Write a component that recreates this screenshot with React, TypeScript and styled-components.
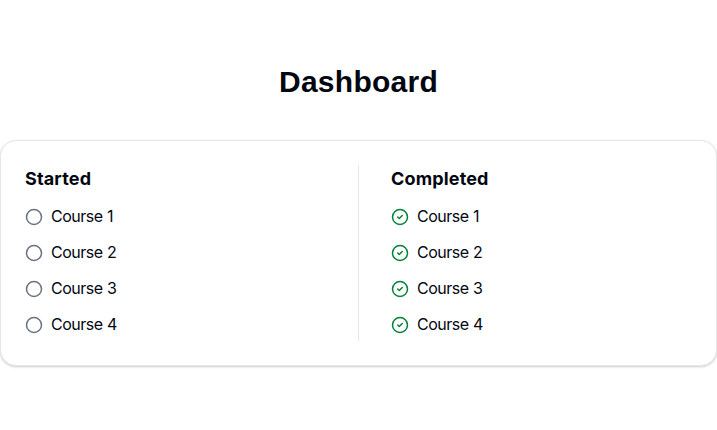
import React from "react";
import styled, { createGlobalStyle } from "styled-components";
import { Circle, CircleCheck } from "lucide-react";

const GlobalStyle = createGlobalStyle`
  *, *::before, *::after { box-sizing: border-box; }
  body {
    margin: 0;
    background: #fff;
    color: #030712;
    font-family: Inter, "Liberation Sans", sans-serif;
    font-size: 16px;
    line-height: 24px;
  }
`;

const Page = styled.main`
  display: flex;
  flex-direction: column;
  align-items: stretch;
  gap: 40px;
  min-height: 100vh;
  padding-top: 64px;
`;

const Title = styled.h1`
  margin: 0;
  font-family: "Liberation Sans", sans-serif;
  font-size: 30px;
  line-height: 36px;
  font-weight: 700;
  text-align: center;
  letter-spacing: 0.25px;
`;

const Card = styled.section`
  display: grid;
  grid-template-columns: 1fr 1fr;
  padding: 24px;
  border: 1px solid #e5e7eb;
  border-radius: 16px;
  background: #fff;
  box-shadow: 0 1px 3px 0 rgba(0, 0, 0, 0.1), 0 1px 2px 0 rgba(0, 0, 0, 0.1);
`;

const Column = styled.div<{ $divided?: boolean }>`
  padding-bottom: 4px;
  padding-left: ${(p) => (p.$divided ? "32.5px" : "0")};
  border-right: ${(p) => (p.$divided ? "none" : "1px solid #e5e7eb")};
`;

const Heading = styled.h2`
  margin: 0 0 12px;
  font-size: 18px;
  line-height: 28px;
  font-weight: 700;
  letter-spacing: 0.15px;
`;

const List = styled.ul`
  display: flex;
  flex-direction: column;
  gap: 12px;
  margin: 0;
  padding: 0;
  list-style: none;
`;

const Item = styled.li<{ $done?: boolean }>`
  display: flex;
  align-items: center;
  gap: 8px;
  height: 24px;

  svg {
    flex: none;
    color: ${(p) => (p.$done ? "#008236" : "#6a7282")};
  }
`;

const Label = styled.span`
  padding-bottom: 2px;
  letter-spacing: -0.5px;
  word-spacing: 0.5px;
`;

const courses = ["Course 1", "Course 2", "Course 3", "Course 4"];

function CourseColumn({ title, done }: { title: string; done?: boolean }) {
  return (
    <Column $divided={done}>
      <Heading>{title}</Heading>
      <List>
        {courses.map((name) => (
          <Item key={name} $done={done}>
            {done ? <CircleCheck size={18} /> : <Circle size={18} />}
            <Label>{name}</Label>
          </Item>
        ))}
      </List>
    </Column>
  );
}

export default function App() {
  return (
    <>
      <GlobalStyle />
      <Page>
        <Title>Dashboard</Title>
        <Card>
          <CourseColumn title="Started" />
          <CourseColumn title="Completed" done />
        </Card>
      </Page>
    </>
  );
}
